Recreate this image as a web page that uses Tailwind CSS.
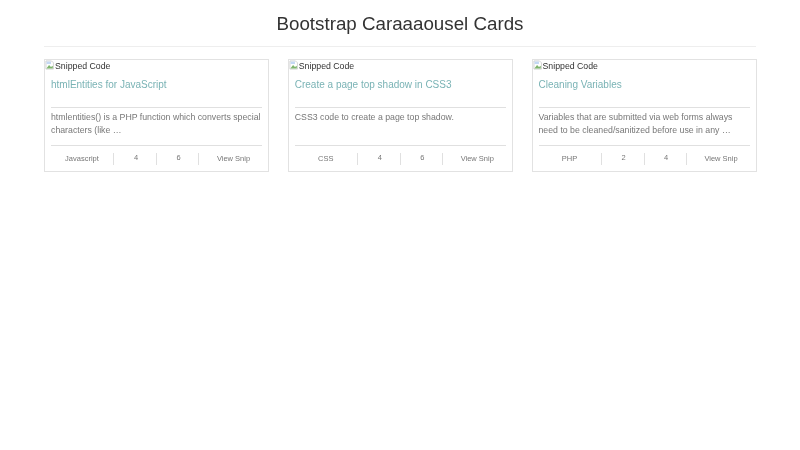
<!DOCTYPE html>
<html><head><meta charset="utf-8"><script src="https://cdn.jsdelivr.net/npm/@tailwindcss/browser@4"></script></head>
<body class="bg-white font-['Liberation_Sans',sans-serif] text-[#333]">
<div class="w-[800px] h-[450px] overflow-hidden px-[44px] blur-[0.4px]">
<h1 class="text-[18.75px] leading-[21px] pt-[13px] pb-[12px] text-center text-[#333] font-normal border-b border-[#eee]">Bootstrap Caraaaousel Cards</h1>
<div class="flex gap-[18.75px] mt-[12px]">

<div class="w-[225px] h-[113px] border border-[#e2e2e2] flex flex-col shrink-0">
<div class="flex items-start h-[18px] text-[8.75px] leading-[12px] text-[#333]"><svg class="w-[10px] h-[10px] shrink-0" viewBox="0 0 16 16"><path d="M1.5 1.5h9l3 3v10h-12z" fill="#fff" stroke="#bbb"/><path d="M2.5 13l4-5 3 3 3-2v4.500h-10z" fill="#7fb56e"/><path d="M2.500 2.500h7v4h-7z" fill="#c4d8f4"/></svg><span>Snipped Code</span></div>
<div class="px-[6px] flex flex-col flex-1">
<h2 class="text-[10px] leading-[14px] text-[#7ab3b5] font-normal h-[29px]">htmlEntities for JavaScript</h2>
<p class="text-[8.75px] leading-[13px] border-t border-[#e0e0e0] pt-[3px] h-[38px] text-[#777]">htmlentities() is a PHP function which converts special characters (like …</p>
<div class="border-t border-[#e0e0e0] grid grid-cols-[62px_43px_42px_1fr] text-[7.5px] leading-[12px] text-[#777] text-center pt-[7px]">
<span>Javascript</span><span class="border-l border-[#e0e0e0] pl-[2px]"><span class="block -translate-y-px">4</span></span><span class="border-l border-[#e0e0e0] pl-[2px]"><span class="block -translate-y-px">6</span></span><span class="border-l border-[#e0e0e0] pl-[6px]">View Snip</span>
</div></div></div>

<div class="w-[225px] h-[113px] border border-[#e2e2e2] flex flex-col shrink-0">
<div class="flex items-start h-[18px] text-[8.75px] leading-[12px] text-[#333]"><svg class="w-[10px] h-[10px] shrink-0" viewBox="0 0 16 16"><path d="M1.5 1.5h9l3 3v10h-12z" fill="#fff" stroke="#bbb"/><path d="M2.5 13l4-5 3 3 3-2v4.500h-10z" fill="#7fb56e"/><path d="M2.500 2.500h7v4h-7z" fill="#c4d8f4"/></svg><span>Snipped Code</span></div>
<div class="px-[6px] flex flex-col flex-1">
<h2 class="text-[10px] leading-[14px] text-[#7ab3b5] font-normal h-[29px]">Create a page top shadow in CSS3</h2>
<p class="text-[8.75px] leading-[13px] border-t border-[#e0e0e0] pt-[3px] h-[38px] text-[#777]">CSS3 code to create a page top shadow.</p>
<div class="border-t border-[#e0e0e0] grid grid-cols-[62px_43px_42px_1fr] text-[7.5px] leading-[12px] text-[#777] text-center pt-[7px]">
<span>CSS</span><span class="border-l border-[#e0e0e0] pl-[2px]"><span class="block -translate-y-px">4</span></span><span class="border-l border-[#e0e0e0] pl-[2px]"><span class="block -translate-y-px">6</span></span><span class="border-l border-[#e0e0e0] pl-[6px]">View Snip</span>
</div></div></div>

<div class="w-[225px] h-[113px] border border-[#e2e2e2] flex flex-col shrink-0">
<div class="flex items-start h-[18px] text-[8.75px] leading-[12px] text-[#333]"><svg class="w-[10px] h-[10px] shrink-0" viewBox="0 0 16 16"><path d="M1.5 1.5h9l3 3v10h-12z" fill="#fff" stroke="#bbb"/><path d="M2.5 13l4-5 3 3 3-2v4.500h-10z" fill="#7fb56e"/><path d="M2.500 2.500h7v4h-7z" fill="#c4d8f4"/></svg><span>Snipped Code</span></div>
<div class="px-[6px] flex flex-col flex-1">
<h2 class="text-[10px] leading-[14px] text-[#7ab3b5] font-normal h-[29px]">Cleaning Variables</h2>
<p class="text-[8.75px] leading-[13px] border-t border-[#e0e0e0] pt-[3px] h-[38px] text-[#777]">Variables that are submitted via web forms always need to be cleaned/sanitized before use in any …</p>
<div class="border-t border-[#e0e0e0] grid grid-cols-[62px_43px_42px_1fr] text-[7.5px] leading-[12px] text-[#777] text-center pt-[7px]">
<span>PHP</span><span class="border-l border-[#e0e0e0] pl-[2px]"><span class="block -translate-y-px">2</span></span><span class="border-l border-[#e0e0e0] pl-[2px]"><span class="block -translate-y-px">4</span></span><span class="border-l border-[#e0e0e0] pl-[6px]">View Snip</span>
</div></div></div>

</div></div>
</body></html>
